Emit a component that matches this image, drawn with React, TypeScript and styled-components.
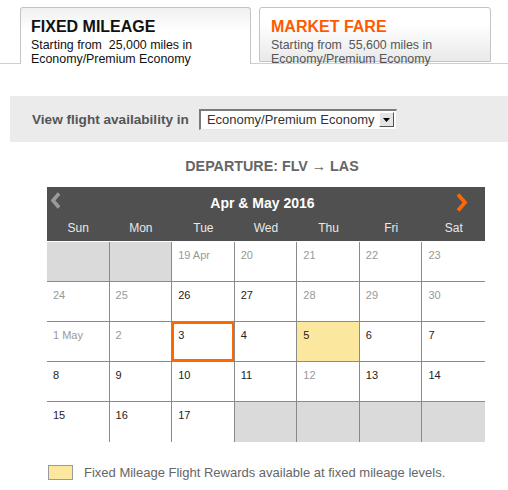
import React from 'react';
import styled, {createGlobalStyle} from 'styled-components';

const GlobalStyle = createGlobalStyle`
  body {
    margin: 0;
    background: #fff;
    font-family: "Liberation Sans", Arial, sans-serif;
  }
`

type DayType = {
    label?: string
    past?: boolean
    empty?: boolean
    selected?: boolean
    reward?: boolean
}

const weekDays = ['Sun', 'Mon', 'Tue', 'Wed', 'Thu', 'Fri', 'Sat']

const days: DayType[] = [
    {empty: true}, {empty: true}, {label: '19 Apr', past: true}, {label: '20', past: true},
    {label: '21', past: true}, {label: '22', past: true}, {label: '23', past: true},
    {label: '24', past: true}, {label: '25', past: true}, {label: '26'}, {label: '27'},
    {label: '28', past: true}, {label: '29', past: true}, {label: '30', past: true},
    {label: '1 May', past: true}, {label: '2', past: true}, {label: '3', selected: true}, {label: '4'},
    {label: '5', reward: true}, {label: '6'}, {label: '7'},
    {label: '8'}, {label: '9'}, {label: '10'}, {label: '11'},
    {label: '12', past: true}, {label: '13'}, {label: '14'},
    {label: '15'}, {label: '16'}, {label: '17'}, {empty: true}, {empty: true}, {empty: true}, {empty: true},
]

const App = () => {
    return (
        <Page>
            <GlobalStyle/>
            <Tabs>
                <Tab active={true}>
                    <TabTitle active={true}>FIXED MILEAGE</TabTitle>
                    <TabText active={true}>Starting from&nbsp; 25,000 miles in<br/>Economy/Premium Economy</TabText>
                </Tab>
                <Tab active={false}>
                    <TabTitle active={false}>MARKET FARE</TabTitle>
                    <TabText active={false}>Starting from&nbsp; 55,600 miles in<br/>Economy/Premium Economy</TabText>
                </Tab>
            </Tabs>

            <FilterBar>
                <FilterLabel>View flight availability in</FilterLabel>
                <SelectBox>
                    <SelectValue>Economy/Premium Economy</SelectValue>
                    <SelectButton>
                        <svg width="7" height="4" viewBox="0 0 7 4">
                            <path d="M0 0 H7 L3.5 4 Z" fill="#000"/>
                        </svg>
                    </SelectButton>
                </SelectBox>
            </FilterBar>

            <Route>DEPARTURE: FLV &rarr; LAS</Route>

            <Calendar>
                <MonthBar>
                    <NavCell align="start">
                        <svg width="11" height="17" viewBox="0 0 11 17">
                            <path d="M9 1.5 L3 8.5 L9 15.5" fill="none" stroke="#9a9a9a" strokeWidth="3.6"/>
                        </svg>
                    </NavCell>
                    <MonthTitle>Apr &amp; May 2016</MonthTitle>
                    <NavCell align="end">
                        <svg width="12" height="19" viewBox="0 0 12 19">
                            <path d="M2 1.5 L9 9.5 L2 17.5" fill="none" stroke="#ff6600" strokeWidth="3.8"/>
                        </svg>
                    </NavCell>
                </MonthBar>
                <WeekRow>
                    {weekDays.map(d => <WeekDay key={d}>{d}</WeekDay>)}
                </WeekRow>
                <Grid>
                    {days.map((d, i) => (
                        <Cell key={i}
                              empty={!!d.empty}
                              reward={!!d.reward}
                              selected={!!d.selected}
                              lastCol={i % 7 === 6}
                              lastRow={i >= 28}>
                            {d.label && <DayNum past={!!d.past}>{d.label}</DayNum>}
                        </Cell>
                    ))}
                </Grid>
            </Calendar>

            <Legend>
                <LegendSwatch/>
                <LegendText>Fixed Mileage Flight Rewards available at fixed mileage levels.</LegendText>
            </Legend>
        </Page>
    );
};

export default App;

const Page = styled.div`
  width: 508px;
  height: 490px;
  overflow: hidden;
`
const Tabs = styled.div`
  display: flex;
  align-items: flex-start;
  gap: 8px;
  padding: 7px 0 0 20px;
  height: 56px;
  border-bottom: 1px solid #cfcfcf;
`
const Tab = styled.div<{ active: boolean }>`
  box-sizing: border-box;
  width: ${props => props.active ? '231px' : '232px'};
  height: ${props => props.active ? '57px' : '55px'};
  padding: 9px 0 0 ${props => props.active ? '10px' : '11px'};
  border: 1px solid #c4c4c4;
  border-bottom: ${props => props.active ? 'none' : '1px solid #c4c4c4'};
  border-radius: 3px 3px 0 0;
  background: ${props => props.active
          ? 'linear-gradient(to bottom, #f0f0f0, #ffffff 40%)'
          : 'linear-gradient(to bottom, #ffffff 30%, #e9e9e9)'};
  position: relative;
  z-index: 1;
`
const TabTitle = styled.div<{ active: boolean }>`
  font-size: 16px;
  font-weight: bold;
  line-height: 20px;
  color: ${props => props.active ? '#111' : '#ff5a00'};
`
const TabText = styled.div<{ active: boolean }>`
  font-size: 12.4px;
  line-height: 14px;
  margin-top: 1px;
  color: ${props => props.active ? '#111' : '#555'};
`
const FilterBar = styled.div`
  display: flex;
  align-items: center;
  margin: 32px 0 0 10px;
  height: 46px;
  padding-left: 22px;
  background: #ebebeb;
`
const FilterLabel = styled.span`
  font-size: 13.6px;
  font-weight: bold;
  color: #555;
  margin-right: 10px;
`
const SelectBox = styled.div`
  box-sizing: border-box;
  display: flex;
  align-items: center;
  width: 198px;
  height: 21px;
  background: #fff;
  border-top: 2px solid #7a7a7a;
  border-left: 2px solid #7a7a7a;
  border-right: 1px solid #e8e8e8;
  border-bottom: 1px solid #e8e8e8;
`
const SelectValue = styled.span`
  flex: 1;
  padding-left: 6px;
  font-size: 13px;
  color: #333;
  white-space: nowrap;
`
const SelectButton = styled.span`
  box-sizing: border-box;
  display: flex;
  align-items: center;
  justify-content: center;
  width: 15px;
  height: 15px;
  margin-right: 2px;
  background: #e4e4e4;
  border-top: 1px solid #fff;
  border-left: 1px solid #fff;
  border-right: 1px solid #555;
  border-bottom: 1px solid #555;
`
const Route = styled.div`
  margin-top: 16px;
  padding-left: 36px;
  text-align: center;
  font-size: 14.3px;
  font-weight: bold;
  line-height: 16px;
  color: #666;
`
const Calendar = styled.div`
  width: 438px;
  margin: 13px 0 0 47px;
`
const MonthBar = styled.div`
  display: grid;
  grid-template-columns: 40px 1fr 40px;
  align-items: center;
  height: 27px;
  background: #505050;
`
const NavCell = styled.div<{ align: 'start' | 'end' }>`
  display: flex;
  justify-content: ${props => props.align === 'start' ? 'flex-start' : 'flex-end'};
  padding: ${props => props.align === 'start' ? '0 0 0 3px' : '3px 17px 0 0'};
`
const MonthTitle = styled.div`
  text-align: center;
  padding: 4px 7px 0 0;
  font-size: 14px;
  font-weight: bold;
  color: #fff;
`
const WeekRow = styled.div`
  display: grid;
  grid-template-columns: repeat(7, 1fr);
  height: 27px;
  align-items: center;
  background: #505050;
`
const WeekDay = styled.div`
  text-align: center;
  font-size: 12px;
  color: #e8e8e8;
`
const Grid = styled.div`
  display: grid;
  grid-template-columns: repeat(7, 1fr);
  grid-auto-rows: 40px;
  padding-top: 1px;
`
const Cell = styled.div<{ empty: boolean; reward: boolean; selected: boolean; lastCol: boolean; lastRow: boolean }>`
  box-sizing: border-box;
  padding: 3px 0 0 6px;
  border-right: ${props => props.lastCol ? 'none' : '1px solid #8a8a8a'};
  border-bottom: ${props => props.lastRow ? 'none' : '1px solid #8a8a8a'};
  background: ${props => props.empty ? '#dadada' : props.reward ? '#fce79f' : '#fff'};
  box-shadow: ${props => props.selected ? 'inset 0 0 0 2px #ff6600' : 'none'};
`
const DayNum = styled.span<{ past: boolean }>`
  font-size: 11px;
  color: ${props => props.past ? '#999' : '#222'};
`
const Legend = styled.div`
  display: flex;
  align-items: center;
  margin: 23px 0 0 48px;
`
const LegendSwatch = styled.div`
  box-sizing: border-box;
  width: 25px;
  height: 15px;
  background: #fce79f;
  border: 1px solid #9a9a9a;
`
const LegendText = styled.span`
  margin-left: 11px;
  font-size: 13px;
  color: #666;
`
